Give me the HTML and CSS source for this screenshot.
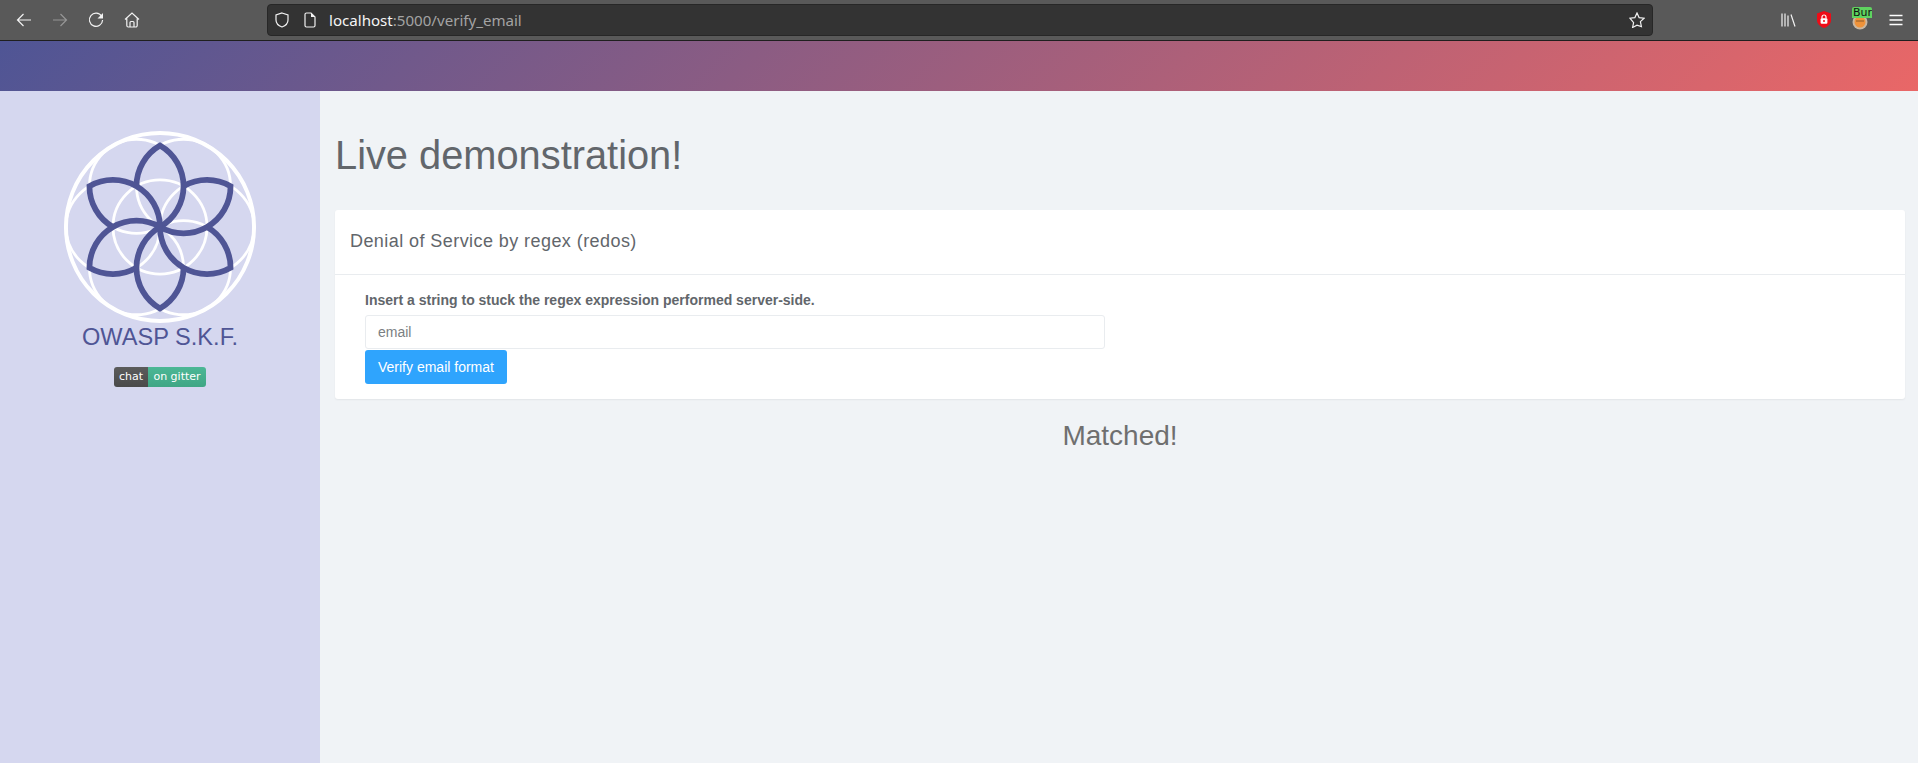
FILE: index.html
```html
<!DOCTYPE html>
<html lang="en">

<head>
    <meta charset="UTF-8">
    <meta name="viewport" content="width=device-width, initial-scale=1.0">
    <title>OWASP S.K.F. - Denial of Service by regex</title>
    <link rel="stylesheet" href="styles.css">
</head>

<body>
    <!-- browser toolbar -->
    <div class="toolbar">
        <div class="toolGroup">
            <span class="toolBtn">
                <svg class="ico" viewBox="0 0 16 16"><path d="M15 8H1.5M7.5 2L1.5 8l6 6" /></svg>
            </span>
            <span class="toolBtn dimmed">
                <svg class="ico" viewBox="0 0 16 16"><path d="M1 8h13.5M8.5 2l6 6-6 6" /></svg>
            </span>
            <span class="toolBtn">
                <svg class="ico" viewBox="0 0 16 16"><path d="M13.6 4.2A6.6 6.6 0 1 0 14.6 8" /><path class="filled" d="M15 1v5.5H9.5z" /></svg>
            </span>
            <span class="toolBtn">
                <svg class="ico" viewBox="0 0 16 16"><path d="M1 7.5L8 1l7 6.500M2.800 6.500V13.500a1.500 1.500 0 0 0 1.500 1.500h7.400a1.500 1.500 0 0 0 1.500-1.500V6.500M6 15V10.500a1 1 0 0 1 1-1h2a1 1 0 0 1 1 1V15" /></svg>
            </span>
        </div>

        <div class="urlBar">
            <svg class="ico urlShield" viewBox="0 0 16 16"><path d="M8 1l6 2v5c0 3.500-2.500 5.800-6 7-3.500-1.200-6-3.500-6-7V3z" /></svg>
            <svg class="ico urlPage" viewBox="0 0 16 16"><path d="M3 2.500A1.500 1.500 0 0 1 4.500 1H9l4 4v8.500a1.500 1.500 0 0 1-1.500 1.500h-7A1.500 1.500 0 0 1 3 13.500z" /><path class="filled" d="M9 1l4 4H9z" /></svg>
            <span class="urlText"><span class="urlHost">localhost</span>:5000/verify_email</span>
            <svg class="ico urlStar" viewBox="0 0 16 16"><path d="M8 1l2.100 4.600 5 .6-3.700 3.400 1 4.900L8 13.100l-4.400 2.400 1-4.900L.9 6.200l5-.6z" /></svg>
        </div>

        <div class="toolGroup">
            <span class="toolBtn">
                <svg class="ico" viewBox="0 0 16 16"><path d="M2 1.500v13M5 1.500v13M8 3.500v11M11 2.500l4 12" /></svg>
            </span>
            <span class="toolBtn">
                <svg class="addon shieldIcon" viewBox="0 0 16 17">
                    <path fill="#ee0c17" d="M8 0l7 2.400v6.600C15 12.800 12 15.600 8 17c-4-1.400-7-4.200-7-8V2.400z" />
                    <rect x="4.600" y="7.300" width="6.800" height="5.500" rx="1" fill="#fff" />
                    <path d="M6 7.500V6a2 2 0 0 1 4 0v1.500" fill="none" stroke="#fff" stroke-width="1.200" />
                    <circle cx="8" cy="10" r="1" fill="#ee0c17" />
                </svg>
            </span>
            <span class="toolBtn">
                <svg class="addon burpIcon" viewBox="0 0 16 16">
                    <circle cx="8" cy="8" r="7.500" fill="#c9b7a2" />
                    <circle cx="8" cy="8" r="5.500" fill="#f0933a" />
                    <path d="M4 7h8" stroke="#8a5a2b" stroke-width="1" />
                </svg>
                <span class="burpLabel">Burp</span>
            </span>
            <span class="toolBtn">
                <svg class="ico menuIcon" viewBox="0 0 16 16"><path d="M1.500 3.500h13M1.500 8h13M1.500 12.500h13" /></svg>
            </span>
        </div>
    </div>

    <div class="topBar"></div>

    <div class="page">
        <aside class="sidebar">
            <svg class="logo" viewBox="-100 -100 200 200">
                <defs>
                    <path id="petal" d="M-23.800 -41.200A47.500 47.500 0 0 1 0 -82.300A47.500 47.500 0 0 1 0 0" />
                </defs>
                <g class="logoRings">
                    <circle r="95" class="outerRing" />
                    <circle r="47.500" />
                    <circle cx="47.500" r="47.500" />
                    <circle cx="-47.500" r="47.500" />
                    <circle cx="23.750" cy="41.140" r="47.500" />
                    <circle cx="-23.750" cy="41.140" r="47.500" />
                    <circle cx="23.750" cy="-41.140" r="47.500" />
                    <circle cx="-23.750" cy="-41.140" r="47.500" />
                </g>
                <g class="logoPetals">
                    <use href="#petal" />
                    <use href="#petal" transform="rotate(60)" />
                    <use href="#petal" transform="rotate(120)" />
                    <use href="#petal" transform="rotate(180)" />
                    <use href="#petal" transform="rotate(240)" />
                    <use href="#petal" transform="rotate(300)" />
                </g>
            </svg>
            <div class="brand">OWASP S.K.F.</div>
            <div class="badge"><span class="badgeLeft">chat</span><span class="badgeRight">on gitter</span></div>
        </aside>

        <main class="content">
            <h1>Live demonstration!</h1>

            <section class="card">
                <div class="cardHeader">Denial of Service by regex (redos)</div>
                <form class="cardBody">
                    <label class="formLabel" for="email">Insert a string to stuck the regex expression performed server-side.</label>
                    <input class="formInput" id="email" type="text" placeholder="email">
                    <button class="btnPrimary" type="button">Verify email format</button>
                </form>
            </section>

            <h2 class="result">Matched!</h2>
        </main>
    </div>
</body>

</html>
```

FILE: styles.css
```css
:root {
    --toolbarColor: #595959;
    --indigo: #4f5595;
    --lilac: #d5d7ef;
    --pageColor: #f0f3f6;
    --textColor: #62666b;
}

* {
    box-sizing: border-box;
}

body {
    margin: 0;
    height: 763px;
    overflow: hidden;
    display: flex;
    flex-direction: column;
    font-family: "Liberation Sans", Arial, sans-serif;
    color: var(--textColor);
    background-color: var(--pageColor);
}

/* toolbar */
.toolbar {
    flex: none;
    height: 41px;
    display: flex;
    align-items: center;
    padding: 0 4px 1px 6px;
    background-color: var(--toolbarColor);
    border-bottom: 1px solid #1f1f1f;
}

.toolGroup {
    display: flex;
}

.toolBtn {
    position: relative;
    width: 36px;
    height: 32px;
    display: flex;
    align-items: center;
    justify-content: center;
}

.dimmed {
    opacity: 0.4;
}

.ico {
    width: 16px;
    height: 16px;
    fill: none;
    stroke: #f2f2f2;
    stroke-width: 1.2;
}

.ico .filled {
    fill: #f2f2f2;
    stroke: none;
}

.menuIcon {
    stroke: #ffffff;
    stroke-width: 1.4;
}

.addon {
    width: 16px;
    height: 16px;
}

.shieldIcon {
    height: 17px;
}

.burpIcon {
    margin-top: 4px;
}

.burpLabel {
    position: absolute;
    left: 10px;
    top: 3px;
    width: 20px;
    height: 11px;
    overflow: hidden;
    background-color: #5fd35f;
    border-radius: 2px 2px 0 0;
    color: #111;
    font-family: "DejaVu Sans", sans-serif;
    font-size: 11px;
    line-height: 11px;
    padding-left: 1px;
}

.urlBar {
    width: 1386px;
    height: 32px;
    margin-left: 117px;
    margin-right: auto;
    display: flex;
    align-items: center;
    padding: 0 7px 0 6px;
    background-color: #333333;
    border: 1px solid #272727;
    border-radius: 4px;
    font-family: "Noto Sans", sans-serif;
    font-size: 15.1px;
    color: #a3a3a3;
}

.urlPage {
    margin-left: 12px;
}

.urlText {
    margin-left: 11px;
    flex: 1;
}

.urlHost {
    color: #f5f5f5;
}

/* page */
.topBar {
    flex: none;
    height: 50px;
    background: linear-gradient(135deg, var(--indigo), #e96767);
}

.page {
    flex: 1;
    display: flex;
}

.sidebar {
    width: 320px;
    flex: none;
    display: flex;
    flex-direction: column;
    align-items: center;
    padding-top: 37px;
    background-color: var(--lilac);
}

.logo {
    width: 198px;
    height: 198px;
}

.logoRings {
    fill: none;
    stroke: #ffffff;
    stroke-width: 2.800;
}

.logoRings .outerRing {
    stroke-width: 4;
}

.logoPetals {
    fill: none;
    stroke: var(--indigo);
    stroke-width: 5.800;
    stroke-miterlimit: 10;
}

.brand {
    margin-top: -3px;
    font-size: 23.600px;
    line-height: 28px;
    color: var(--indigo);
}

.badge {
    display: flex;
    height: 20px;
    margin-top: 16px;
    border-radius: 3px;
    overflow: hidden;
    font-family: "DejaVu Sans", sans-serif;
    font-size: 11px;
    line-height: 20px;
    color: #ffffff;
}

.badgeLeft {
    width: 34px;
    text-align: center;
    background: linear-gradient(#5b5b5b, #4a4a4a);
}

.badgeRight {
    width: 58px;
    text-align: center;
    background: linear-gradient(#4cb795, #3fa684);
}

.content {
    flex: 1;
    padding: 0 13px 0 15px;
}

.content h1 {
    margin: 39px 0 0;
    font-size: 39.800px;
    line-height: 50px;
    font-weight: 400;
}

.card {
    margin-top: 30px;
    height: 189px;
    background-color: #ffffff;
    border-radius: 3px;
    box-shadow: 0 1px 2px rgba(0, 0, 0, 0.06);
}

.cardHeader {
    height: 65px;
    padding-left: 15px;
    font-size: 18px;
    line-height: 62px;
    letter-spacing: 0.43px;
    border-bottom: 1px solid #e9ecef;
}

.cardBody {
    display: flex;
    flex-direction: column;
    align-items: flex-start;
    padding: 15px 30px 0;
}

.formLabel {
    font-size: 14px;
    font-weight: 700;
    line-height: 20px;
    margin-bottom: 5px;
}

.formInput {
    width: 740px;
    height: 34px;
    padding: 0 12px;
    border: 1px solid #e9ecef;
    border-radius: 3px;
    font-family: inherit;
    font-size: 14px;
    color: var(--textColor);
}

.formInput::placeholder {
    color: #7b7f83;
    opacity: 1;
}

.btnPrimary {
    height: 34px;
    margin-top: 1px;
    padding: 0 13px;
    border: 0;
    border-radius: 3px;
    background-color: #2fa4fd;
    color: #ffffff;
    font-family: inherit;
    font-size: 14px;
}

.result {
    margin: 20px 0 0;
    text-align: center;
    font-size: 28px;
    line-height: 34px;
    font-weight: 400;
    color: #6f6f6f;
}
```
